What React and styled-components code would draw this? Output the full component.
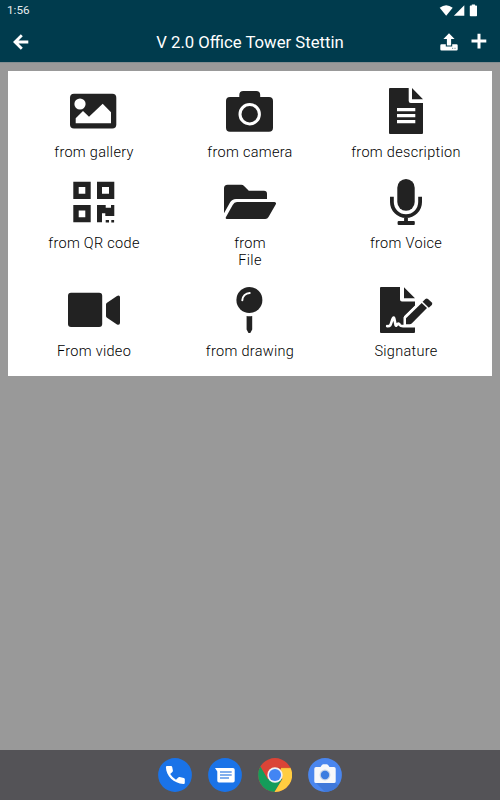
import React from 'react'
import styled, { createGlobalStyle } from 'styled-components'

const colors = {
    header: '#003b4d',
    backdrop: '#999999',
    ink: '#222222',
    dock: '#545357',
    blue: '#1a73e8'
}

const GlobalStyle = createGlobalStyle`
    body {
        margin: 0;
        background: ${colors.backdrop};
        font-family: Roboto, sans-serif;
    }
    svg {
        display: block;
        flex: none;
    }
`

const Screen = styled.div`
    display: flex;
    flex-direction: column;
    width: 500px;
    height: 800px;
    overflow: hidden;
    background: ${colors.backdrop};
`

const Header = styled.header`
    height: 63px;
    box-sizing: border-box;
    border-bottom: 1px solid #838d90;
    background: ${colors.header};
    color: #fff;
`

const StatusBar = styled.div`
    display: flex;
    justify-content: space-between;
    align-items: center;
    height: 21px;
    padding: 0 22px 0 7px;
`

const Clock = styled.span`
    font-size: 11.7px;
    line-height: 21px;
    color: #e6ecee;
`

const TitleBar = styled.div`
    display: grid;
    grid-template-columns: 60px 1fr 60px;
    align-items: center;
    height: 41px;
`

const Title = styled.h1`
    margin: 0;
    padding-top: 1px;
    font-size: 16.7px;
    font-weight: 400;
    line-height: 41px;
    text-align: center;
    white-space: nowrap;
`

const Actions = styled.div`
    display: flex;
`

const IconButton = styled.button`
    display: flex;
    width: ${({ $width }) => $width}px;
    padding: 0 0 0 ${({ $indent }) => $indent || 0}px;
    box-sizing: border-box;
    border: 0;
    background: none;
    color: #fff;
`

const Content = styled.main`
    flex: 1;
    padding: 8px 8px 0;
`

const Panel = styled.section`
    display: grid;
    grid-template-columns: repeat(3, 1fr);
    align-content: start;
    height: 305px;
    padding: 14px 8px 0;
    box-sizing: border-box;
    background: #fff;
`

const Option = styled.button`
    display: flex;
    flex-direction: column;
    align-items: center;
    padding: 0 0 15px;
    border: 0;
    background: none;
    color: ${colors.ink};
    font-family: inherit;
`

const Label = styled.span`
    margin-top: 7px;
    font-size: 14.5px;
    font-weight: 300;
    line-height: 17px;
    letter-spacing: 0.3px;
    color: #000;
    white-space: pre-line;
`

const Dock = styled.nav`
    display: flex;
    justify-content: center;
    align-items: center;
    gap: 16px;
    height: 50px;
    background: ${colors.dock};
`

const Glyph = ({ children }) => (
    <svg width="60" height="52" viewBox="0 2 60 52" fill="currentColor">
        {children}
    </svg>
)

const GalleryIcon = () => (
    <Glyph>
        <rect x="6" y="10.7" width="46.3" height="34.7" rx="4" />
        <circle cx="16" cy="21" r="5.6" fill="#fff" />
        <path d="M11.7 35.3 19 28l6 5.7 13.7-13 8.3 8.6v11H11.7z" fill="#fff" />
    </Glyph>
)

const CameraIcon = () => (
    <Glyph>
        <path d="M10 14h9.3v-2a4 4 0 0 1 4-4h12.9a4 4 0 0 1 4 4v2H49a4 4 0 0 1 4 4v26.7a4 4 0 0 1-4 4H10a4 4 0 0 1-4-4V18a4 4 0 0 1 4-4z" />
        <circle cx="29.7" cy="31.2" r="9.7" fill="none" stroke="#fff" strokeWidth="3" />
    </Glyph>
)

const DocumentIcon = () => (
    <Glyph>
        <path d="M14 5h18.7v13q0 2 2 2H47v30q0 1-1 1H14q-1 0-1-1V6q0-1 1-1zM36 5l11 11.3H36z" />
        <path d="M21 25h18.3v3.3H21zM21 31h18.3v3.3H21zM21 37h18.3v3.3H21z" fill="#fff" />
    </Glyph>
)

const QrIcon = () => (
    <Glyph>
        <path
            fillRule="evenodd"
            d="M9.3 7.7h17.4V25H9.3zM14.7 13v6.8h6.6V13zM33 7.7h17.3V25H33zM38 13v6.8h7V13zM9.3 31h17.4v17.3H9.3zM14.7 36.4v6.8h6.6v-6.8z"
        />
        <path d="M33 31h8.7v2.7H47V31h3.3v11h-9v-2.7H38v9h-5zM41.7 46H45v2.5h-3.3zM47.3 46h2.8v2.5h-2.8z" />
    </Glyph>
)

const FolderIcon = () => (
    <Glyph>
        <path d="M4 39.3v-25q0-3.6 3.6-3.6h13.7q1.5 0 2.5 1l5 5H44q3 0 3 3V25H16q-4 0-6 3.5z" />
        <path d="M17 28h37.5q2.3.3 1.2 2.5l-7.2 12.4q-1 2.1-3.2 2.1H6.8q-1.7-.2-.8-2l6.7-12q1.5-3 4.3-3z" />
    </Glyph>
)

const MicIcon = () => (
    <Glyph>
        <rect x="21.3" y="5" width="17.4" height="31.7" rx="8.7" />
        <path d="M15.9 22.7V28a14.1 14.1 0 0 0 28.2 0v-5.3M30 42v7" fill="none" stroke="currentColor" strokeWidth="3.8" />
        <rect x="21.6" y="47" width="17.2" height="3.9" rx="1" />
    </Glyph>
)

const VideoIcon = () => (
    <Glyph>
        <rect x="4" y="10.7" width="34.2" height="34.3" rx="3" />
        <path d="M43 20.7 53 14q3-1.2 3 1.3v25.5q0 2.5-3 1.6l-10-6.6q-1-.7-1-1.7V22.4q0-1 1-1.7z" />
    </Glyph>
)

const PinIcon = () => (
    <Glyph>
        <circle cx="29.4" cy="18" r="13" />
        <path d="M22.3 18.3a7.5 7.5 0 0 1 7.4-7.4" fill="none" stroke="#fff" strokeWidth="2" strokeLinecap="round" />
        <path d="M26.6 34q2.8.6 5.6 0v13.5L30.3 51h-1.8l-1.9-3.5z" />
    </Glyph>
)

const SignatureIcon = () => (
    <Glyph>
        <path d="M5 5h19v12.4q0 2 2 2h13v4L28 34.2v10h11V50q0 1-1 1H5q-1 0-1-1V6q0-1 1-1zM28 5.3l11 11H28z" />
        <path
            d="M11.2 44.2c4 .4 3.500-2.600 5.600-7.800.6-1.400 1.200-1 1.500.4l1.300 6.200c.5 1.400 1.400-.2 2.100-1 .9-1 1.500 0 2.100 1 .8 1.200 1.800 1.200 3.200 1.200H39"
            fill="none"
            stroke="#fff"
            strokeWidth="2.7"
            strokeLinecap="round"
            strokeLinejoin="round"
        />
        <path
            d="M30 42.3v-6L45.7 21l5.3 5-15.3 15.600q-.8.7-2 .7z"
            stroke="#fff"
            strokeWidth="5"
            paintOrder="stroke"
        />
        <path d="M46.6 19.8 49.4 17q1.3-1.2 2.6 0l3.8 3.6q1 1.2 0 2.4l-3 2.7z" />
    </Glyph>
)

const BackIcon = () => (
    <svg width="16" height="16" viewBox="0 0 16 16" fill="none" stroke="currentColor" strokeWidth="2.8">
        <path d="M8.8 1.2 2 8l6.800 6.800M2 8H15.300" />
    </svg>
)

const UploadIcon = () => (
    <svg width="18" height="18" viewBox="0 0 18 18" fill="currentColor">
        <path d="M9 .3 14.6 6h-3.500v6.400H6.900V6H3.400z" />
        <path d="M1.5 11.2h4.300v2.200h6.400v-2.200h4.300q1.200 0 1.200 1.200v3.800q0 1.200-1.200 1.200h-15q-1.200 0-1.200-1.200v-3.800q0-1.200 1.200-1.200z" />
        <path d="M12 14.8h1.200V16H12zM14.4 14.8h1.200V16h-1.200z" fill="#8ba3ac" />
    </svg>
)

const PlusIcon = () => (
    <svg width="16" height="16" viewBox="0 0 16 16" fill="none" stroke="currentColor" strokeWidth="3">
        <path d="M8 .7v14.800M.5 8h14.800" />
    </svg>
)

const SystemIcons = () => (
    <svg width="39" height="14" viewBox="439 3.500 39 14" fill="#fff">
        <path d="M439.7 7.2q6.500-5 13 0L446.200 15.200z" />
        <path d="M464.3 4.8v10.400h-10.400z" />
        <path d="M470.6 5h1.200V4h3.200v1h1.300q.7 0 .7.8V15q0 .8-.7.8h-5.700q-.8 0-.8-.8V5.800q0-.8.8-.8z" />
    </svg>
)

const AppIcon = ({ fill, children }) => (
    <svg width="34" height="34" viewBox="0 0 34 34">
        <circle cx="17" cy="17" r="16.9" fill={fill} />
        {children}
    </svg>
)

const PhoneApp = () => (
    <AppIcon fill={colors.blue}>
        <path
            d="M9 8h4q1 0 1.200 1l.7 3.500q.1.8-.5 1.400l-2.200 2.200a15 15 0 0 0 5.800 5.600l2.200-2.200q.6-.6 1.400-.4l4.200.8q1 .2 1 1.200v3.700q0 1.300-1.300 1.200C15.500 25.500 8.300 18 7.900 9.300Q7.900 8 9 8z"
            fill="#fff"
        />
    </AppIcon>
)

const MessagesApp = () => (
    <AppIcon fill={colors.blue}>
        <path d="M7 10h18q1.700 0 1.700 1.700v11.100q0 1.600-1.700 1.600H11q-1.700 0-1.700-1.600v-9.300z" fill="#fff" />
        <path d="M12 14h11.700M12 17h11.700M12 20h9" stroke="#5b95e8" strokeWidth="1.300" />
    </AppIcon>
)

const ChromeApp = () => (
    <AppIcon fill="#db4437">
        <path d="M2.400 8.500A16.900 16.900 0 0 0 16.500 33.900L24.300 21 17 17 9.800 21.200z" fill="#149c5a" />
        <path d="M32.500 9.700A16.900 16.900 0 0 1 16.500 33.900L24.300 21.200 23 12V9.700z" fill="#ffcd40" />
        <path d="M17 9.700h15.500" stroke="#c53929" strokeWidth=".5" />
        <circle cx="17" cy="17" r="7.700" fill="#f1f1f1" />
        <circle cx="17" cy="17" r="6.100" fill="#4285f4" />
    </AppIcon>
)

const CameraApp = () => (
    <AppIcon fill="#4a86ee">
        <path d="M27.400 24.800 30.400 27.400A16.900 16.900 0 0 1 17 33.900L8 25z" fill="#3f78da" />
        <path
            d="M8 9h4.500l1.400-2q.6-.8 1.500-.8h3.200q.9 0 1.500.8l1.400 2H26q1.700 0 1.700 1.700v12.700q0 1.700-1.700 1.700H8q-1.700 0-1.700-1.700V10.700Q6.300 9 8 9z"
            fill="#f7f8fa"
        />
        <circle cx="17" cy="17" r="5.400" fill="#c7d4e8" />
        <circle cx="17" cy="17" r="4.200" fill="#3c7de0" />
    </AppIcon>
)

const options = [
    { label: 'from gallery', Icon: GalleryIcon },
    { label: 'from camera', Icon: CameraIcon },
    { label: 'from description', Icon: DocumentIcon },
    { label: 'from QR code', Icon: QrIcon },
    { label: 'from\nFile', Icon: FolderIcon },
    { label: 'from Voice', Icon: MicIcon },
    { label: 'From video', Icon: VideoIcon },
    { label: 'from drawing', Icon: PinIcon },
    { label: 'Signature', Icon: SignatureIcon }
]

const App = () => (
    <>
        <GlobalStyle />
        <Screen>
            <Header>
                <StatusBar>
                    <Clock>1:56</Clock>
                    <SystemIcons />
                </StatusBar>
                <TitleBar>
                    <IconButton $width={40} $indent={12.5}><BackIcon /></IconButton>
                    <Title>V 2.0 Office Tower Stettin</Title>
                    <Actions>
                        <IconButton $width={31}><UploadIcon /></IconButton>
                        <IconButton $width={20}><PlusIcon /></IconButton>
                    </Actions>
                </TitleBar>
            </Header>
            <Content>
                <Panel>
                    {options.map(({ label, Icon }) => (
                        <Option key={label}>
                            <Icon />
                            <Label>{label}</Label>
                        </Option>
                    ))}
                </Panel>
            </Content>
            <Dock>
                <PhoneApp />
                <MessagesApp />
                <ChromeApp />
                <CameraApp />
            </Dock>
        </Screen>
    </>
)

export default App
